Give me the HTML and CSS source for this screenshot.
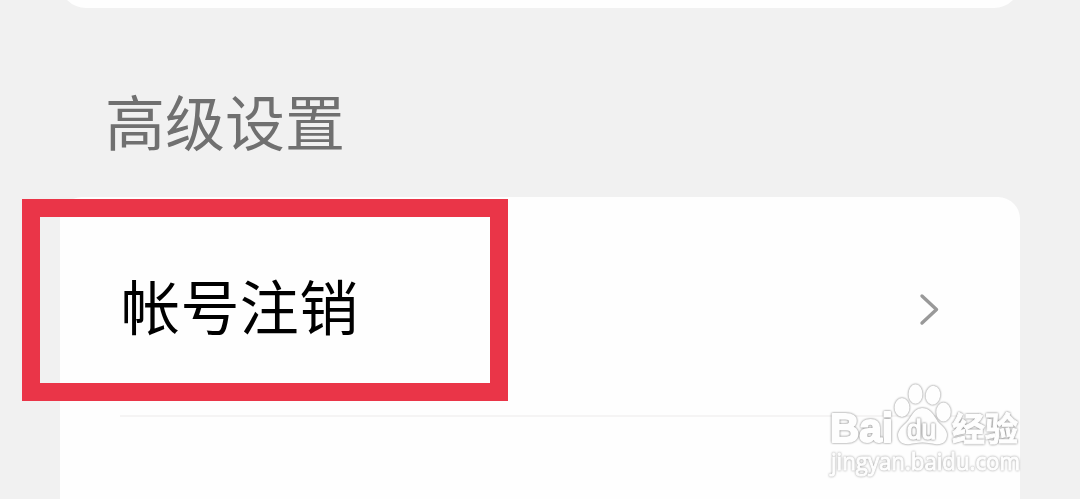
FILE: index.html
```html
<!DOCTYPE html>
<html lang="zh-CN">
<head>
  <meta charset="UTF-8">
  <meta name="viewport" content="width=device-width, initial-scale=1.0">
  <title>高级设置</title>
  <link rel="stylesheet" href="styles.css">
</head>
<body>
  <div class="card card-prev"></div>

  <h2 class="section-title">高级设置</h2>

  <div class="card card-main">
    <div class="row">
      <span class="row-label">帐号注销</span>
      <svg class="arrow" width="24" height="36" viewBox="0 0 24 36">
        <path d="M4 5 L18.5 18.5 L4 32"/>
      </svg>
    </div>
    <div class="row-next"></div>
  </div>

  <!-- 红框标注 -->
  <div class="highlight"></div>

  <!-- 水印 -->
  <svg class="watermark" width="204" height="100" viewBox="0 0 204 100">
    <g class="mark">
      <text class="latin" x="10" y="62" font-size="41" textLength="63" lengthAdjust="spacingAndGlyphs">Bai</text>
      <ellipse cx="82" cy="27.5" rx="6.5" ry="8.5"/>
      <ellipse cx="95.5" cy="14" rx="6" ry="8.8"/>
      <ellipse cx="113" cy="15.3" rx="6.3" ry="8.5" transform="rotate(8 113 15)"/>
      <ellipse cx="123.5" cy="32" rx="6.3" ry="8.5"/>
      <path d="M102 29 C95 29 93 36 89 41 C84 47 79 49 79 55 C79 61 83 64 90 63 C98 61 107 61 115 63 C122 64 126 61 126 55 C126 49 121 47 117 42 C113 36 110 29 102 29 Z"/>
      <text class="cjk" x="132" y="61" font-size="33">经验</text>
    </g>
    <text class="du" x="87" y="58.5" font-size="27" textLength="29" lengthAdjust="spacingAndGlyphs">du</text>
    <text class="site" x="11" y="89.5" font-size="23" textLength="189" lengthAdjust="spacingAndGlyphs">jingyan.baidu.com</text>
  </svg>
</body>
</html>
```

FILE: styles.css
```css
body {
  margin: 0;
  height: 499px;
  position: relative;
  overflow: hidden;
  display: flex;
  flex-direction: column;
  background-color: #f1f1f1;
  font-family: "Liberation Sans", "Noto Sans CJK SC", sans-serif;
}
.card {
  margin: 0 60px;
  background-color: #fefefe;
}
.card-prev {
  flex-shrink: 0;
  height: 38px;
  margin-top: -30px;
  border-radius: 0 0 26px 26px;
}
.section-title {
  flex-shrink: 0;
  margin: 0;
  height: 189px;
  padding: 74px 0 0 105px;
  box-sizing: border-box;
  font-size: 60px;
  line-height: 88px;
  font-weight: normal;
  color: #707070;
}
.card-main {
  flex: 1;
  border-radius: 22px 22px 0 0;
}
.row {
  display: flex;
  align-items: center;
  justify-content: space-between;
  height: 218px;
  padding: 0 78px 0 61px;
}
.row-label {
  font-size: 59px;
  line-height: 88px;
  padding-top: 8px;
  letter-spacing: 0.4px;
  color: #000;
}
.arrow {
  margin-top: 5px;
  fill: none;
  stroke: #999;
  stroke-width: 3.4;
  stroke-linecap: round;
  stroke-linejoin: round;
}
.row-next {
  margin: 0 60px;
  border-top: 2px solid #f5f4f4;
}
.highlight {
  position: absolute;
  left: 22px;
  top: 198.5px;
  width: 450px;
  height: 166px;
  border: 18px solid #ea3548;
}
.watermark {
  position: absolute;
  left: 820px;
  top: 380px;
  overflow: visible;
  fill: #fefefe;
  stroke: #fefefe;
  stroke-linejoin: round;
}
.mark {
  stroke-width: 2;
  filter: drop-shadow(0 0 0.8px #777);
}
.latin {
  font-family: "Liberation Sans", sans-serif;
  font-weight: bold;
}
.du {
  font-family: "Liberation Sans", sans-serif;
  stroke-width: 1.5;
  filter: drop-shadow(0 0 0.8px #666);
}
.cjk {
  font-family: "Noto Sans CJK SC", sans-serif;
  font-weight: bold;
  stroke-width: 1;
}
.site {
  font-family: "Open Sans", sans-serif;
  stroke-width: 1;
  filter: drop-shadow(0 0 0.8px #999);
}
```
